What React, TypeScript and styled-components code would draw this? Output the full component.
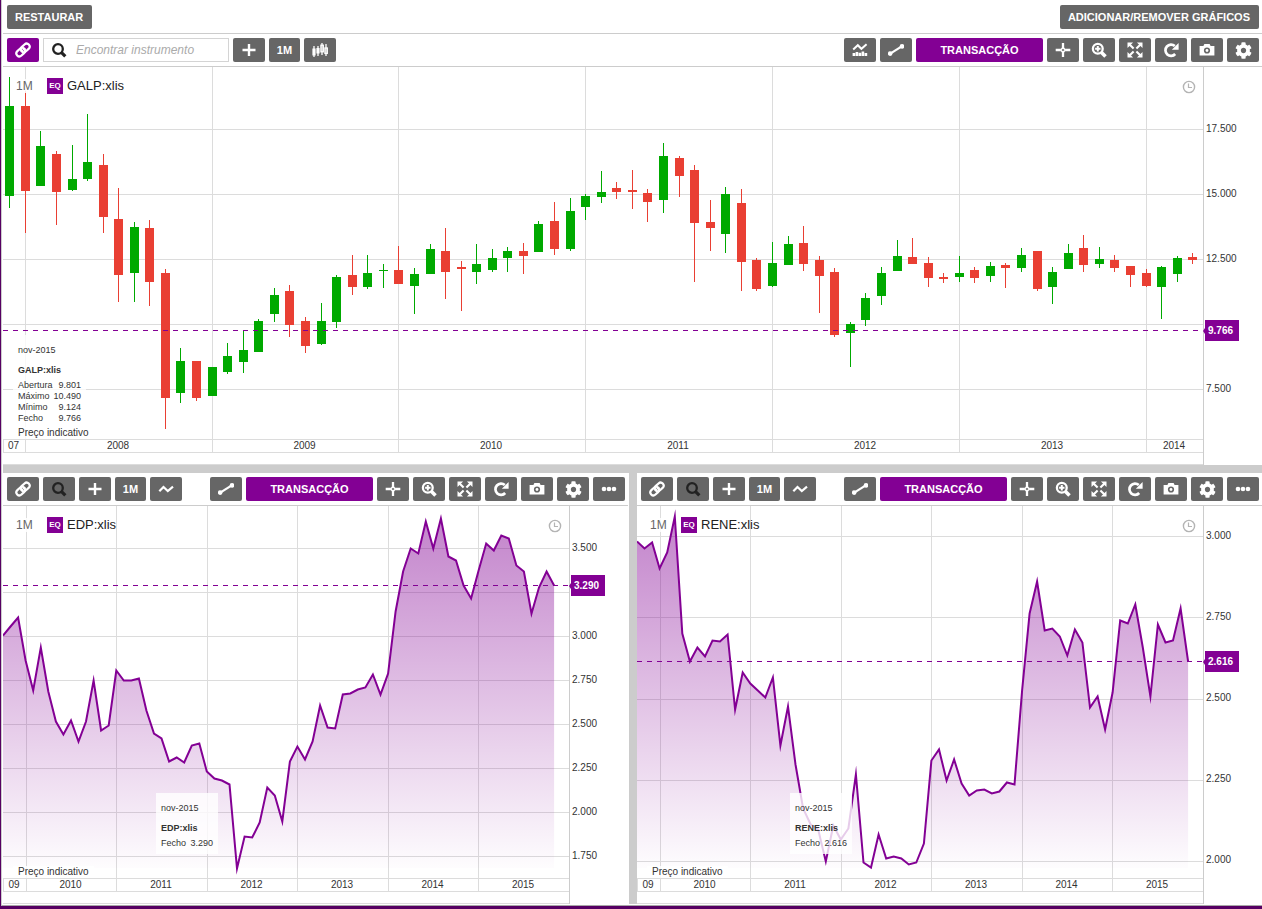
import React from 'react';
import styled, { createGlobalStyle } from 'styled-components';
import { FaCog } from 'react-icons/fa';

const PURPLE = '#830094';
const GREY = '#666';
const GRID = '#dcdcdc';
const UP = '#00a900';
const DOWN = '#e93f33';
const PLOT_HEIGHT = 372;

const GlobalStyle = createGlobalStyle`
  *, *::before, *::after { box-sizing: border-box; }
  body {
    margin: 0;
    background: #fff;
    color: #333;
    font-family: "Liberation Sans", Arial, sans-serif;
  }
`;

const Frame = styled.div`
  padding: 0 0 3px 1px;
  background: #560062;
`;

const Workspace = styled.main`
  padding: 0 0 1px 1px;
  border-left: 1px solid #ccc;
  border-bottom: 1px solid #a8a8a8;
  background: #fff;
`;

const TopBar = styled.header`
  display: flex;
  justify-content: space-between;
  padding: 5px 3px 4px 4px;
  border-bottom: 1px solid #ccc;
`;

const Button = styled.button<{ $accent?: boolean; $width?: number; $dark?: boolean }>`
  display: flex;
  flex: none;
  align-items: center;
  justify-content: center;
  width: ${p => (p.$width ? `${p.$width}px` : 'auto')};
  height: 24px;
  padding: ${p => (p.$width ? '0' : '0 9px 0 8px')};
  border: 0;
  border-radius: 2px;
  background: ${p => (p.$accent ? PURPLE : GREY)};
  color: ${p => (p.$dark ? '#222' : '#fff')};
  font: bold 11px/24px "Liberation Sans", Arial, sans-serif;
  white-space: nowrap;
  cursor: pointer;
`;

const Toolbar = styled.div`
  display: flex;
  justify-content: space-between;
  gap: 4px;
  padding: 4px 3px 4px 4px;
  border-bottom: 1px solid #ccc;
`;

const ButtonGroup = styled.div`
  display: flex;
  gap: 4px;
`;

const SearchField = styled.label`
  display: flex;
  align-items: center;
  gap: 9px;
  width: 186px;
  height: 24px;
  padding-left: 7px;
  border: 1px solid #d4d4d4;
  color: #222;
`;

const SearchInput = styled.input`
  flex: 1;
  min-width: 0;
  padding: 0;
  border: 0;
  outline: 0;
  background: none;
  font: italic 12px/20px "Liberation Sans", Arial, sans-serif;
  &::placeholder { color: #aaa; opacity: 1; }
`;

const Splitter = styled.div`
  flex: none;
  width: 8px;
  background: #ccc;
`;

const RowSplitter = styled.div`
  height: 8px;
  background: #ccc;
`;

const PanelRow = styled.div`
  display: flex;
`;

const PanelBox = styled.section<{ $inset?: number }>`
  flex: 1 1 0;
  min-width: 0;
  padding-right: ${p => p.$inset ?? 0}px;
`;

const Body = styled.div`
  display: flex;
`;

const PlotColumn = styled.div`
  flex: 1;
  min-width: 0;
`;

const Plot = styled.div`
  position: relative;
`;

const PlotSvg = styled.svg`
  display: block;
  width: 100%;
  height: ${PLOT_HEIGHT}px;
`;

const TimeAxis = styled.div<{ $columns: string }>`
  display: grid;
  grid-template-columns: ${p => p.$columns};
  height: 14px;
  border-top: 1px solid ${GRID};
  border-bottom: 1px solid ${GRID};
`;

const TimeCell = styled.div`
  min-width: 0;
  padding-right: 2px;
  border-left: 1px solid ${GRID};
  font-size: 10px;
  line-height: 12px;
  text-align: center;
`;

const Footer = styled.div`
  height: 12px;
  border-bottom: 1px solid ${GRID};
`;

const PriceScale = styled.div<{ $start: number; $gap: number }>`
  position: relative;
  display: flex;
  flex: none;
  flex-direction: column;
  gap: ${p => p.$gap}px;
  width: 59px;
  padding: ${p => p.$start}px 0 0 2px;
  border-left: 1px solid #ccc;
`;

const Price = styled.div`
  height: 12px;
  font-size: 10px;
  line-height: 12px;
`;

const PriceTag = styled.div<{ $top: number }>`
  position: absolute;
  top: ${p => p.$top}px;
  left: 1px;
  width: 34px;
  padding-left: 3px;
  background: ${PURPLE};
  color: #fff;
  font-size: 10px;
  font-weight: bold;
  line-height: 21px;
  &::before {
    content: "";
    position: absolute;
    top: 8px;
    left: -2px;
    border: solid transparent;
    border-width: 3px 2px 3px 0;
    border-right-color: ${PURPLE};
  }
`;

const Heading = styled.div`
  position: absolute;
  top: 11px;
  left: 13px;
  display: flex;
  align-items: center;
  height: 16px;
`;

const Period = styled.span`
  width: 18px;
  margin-right: 13px;
  background: rgba(255, 255, 255, 0.85);
  color: #666;
  font-size: 12px;
  line-height: 14px;
`;

const Kind = styled.span`
  width: 16px;
  margin-right: 4px;
  background: ${PURPLE};
  color: #fff;
  font-size: 8px;
  font-weight: bold;
  line-height: 16px;
  text-align: center;
`;

const Symbol = styled.span`
  color: #222;
  font-size: 13px;
  line-height: 16px;
`;

const Clock = styled.svg`
  position: absolute;
  top: 13px;
  right: 7px;
  width: 14px;
  height: 14px;
`;

const Legend = styled.div<{ $left: number; $top: number; $width: number }>`
  position: absolute;
  top: ${p => p.$top}px;
  left: ${p => p.$left}px;
  width: ${p => p.$width}px;
  padding: 5px;
  background: rgba(255, 255, 255, 0.8);
  font-size: 9px;
  line-height: 20px;
`;

const LegendName = styled.div`
  font-weight: bold;
`;

const LegendTable = styled.table`
  width: 100%;
  border-collapse: collapse;
  line-height: 11px;
  th, td { padding: 0; font-weight: normal; text-align: left; }
  td { text-align: right; }
`;

const Note = styled.div`
  position: absolute;
  bottom: 0;
  left: 10px;
  padding: 0 5px;
  background: rgba(255, 255, 255, 0.8);
  font-size: 10px;
  line-height: 12px;
`;

const Icon = ({ children }: { children: React.ReactNode }) => (
  <svg width="16" height="16" viewBox="0 0 16 16" fill="none" stroke="currentColor" strokeWidth="2" aria-hidden="true">
    {children}
  </svg>
);

const LinkIcon = () => (
  <Icon>
    <g transform="rotate(-43 8 8)" strokeWidth="2.2">
      <rect x="0.1" y="5" width="9.6" height="6" rx="3" />
      <rect x="6.3" y="5" width="9.6" height="6" rx="3" />
      <path d="M5 8h6" strokeWidth="1.4" />
    </g>
  </Icon>
);
const SearchIcon = () => (
  <Icon>
    <circle cx="7" cy="7" r="4.8" strokeWidth="2.3" />
    <path d="M10.3 10.3 L14.3 14.3" strokeWidth="3.2" />
  </Icon>
);
const PlusIcon = () => <Icon><path d="M1.5 8h13M8 2v12" strokeWidth="2.4" /></Icon>;
const CandlesIcon = () => (
  <Icon>
    <path d="M2 4v11M6 4v10M10 1v12M14 2v12" strokeWidth="1.3" />
    <path d="M2 6.5v7M6 6v5.5" strokeWidth="3.2" />
    <rect x="8.9" y="3.2" width="2.4" height="6.6" strokeWidth="1.3" />
    <rect x="12.9" y="6" width="2.4" height="5.4" strokeWidth="1.3" />
  </Icon>
);
const LineIcon = () => <Icon><path d="M1.3 10.3 L5.5 6 L9.8 10 L15 5.7" strokeWidth="2.2" /></Icon>;
const StudiesIcon = () => (
  <Icon>
    <path d="M1.2 7.4 L5.8 3.2 L9.4 6.8 L14.6 2.3" strokeWidth="2" />
    <path d="M1.9 11v3M4.9 10v4M7.9 10.8v3.2M10.9 9.6v4.4M13.9 11v3" strokeWidth="2.6" />
  </Icon>
);
const TrendIcon = () => (
  <Icon>
    <path d="M2.3 11.7 L13.7 4.3" strokeWidth="2.2" />
    <g fill="currentColor" stroke="none">
      <circle cx="2.2" cy="11.6" r="2.3" />
      <circle cx="14" cy="4.4" r="2.3" />
    </g>
  </Icon>
);
const CrosshairIcon = () => (
  <Icon>
    <path d="M0.7 8h5M10.3 8h5M8 1v5M8 10v5" strokeWidth="2.3" />
    <path d="M8 5.6 L10.4 8 L8 10.4 L5.6 8z" strokeWidth="1.5" />
  </Icon>
);
const ZoomIcon = () => (
  <Icon>
    <circle cx="6.8" cy="6.8" r="4.9" strokeWidth="2.3" />
    <path d="M4.1 6.8h5.4M6.8 4.1v5.4" strokeWidth="2" />
    <path d="M10.5 10.5 L14.5 14.5" strokeWidth="3.6" />
  </Icon>
);
const ExpandIcon = () => (
  <Icon>
    <path d="M2.5 2.5 L6.6 6.6M13.5 2.5 L9.4 6.6M2.5 13.5 L6.6 9.4M13.5 13.5 L9.4 9.4" strokeWidth="2.1" />
    <path d="M0.5 0.5h5.6l-5.6 5.6zM15.5 0.5h-5.6l5.6 5.6zM0.5 15.5h5.6l-5.6-5.6zM15.5 15.5h-5.6l5.6-5.6z" fill="currentColor" stroke="none" />
  </Icon>
);
const RefreshIcon = () => (
  <Icon>
    <path d="M12.2 12 A5.6 5.6 0 1 1 11.8 4.1" strokeWidth="2.7" />
    <path d="M15.6 1v6.8H8.8z" fill="currentColor" stroke="none" />
  </Icon>
);
const CameraIcon = () => (
  <Icon>
    <path
      d="M0.6 4h3.8l1-2h5.2l1 2h3.8v9.6H0.6zM8 5.4a3.1 3.1 0 1 0 0 6.2a3.1 3.1 0 0 0 0-6.2z"
      fill="currentColor"
      fillRule="evenodd"
      stroke="none"
    />
    <circle cx="8" cy="8.5" r="1.4" fill="currentColor" stroke="none" />
  </Icon>
);
const DotsIcon = () => (
  <Icon>
    <g fill="currentColor" stroke="none">
      <circle cx="3" cy="8" r="2.3" />
      <circle cx="8" cy="8" r="2.3" />
      <circle cx="13" cy="8" r="2.3" />
    </g>
  </Icon>
);

type Candle = [high: number, top: number, bottom: number, low: number, rising: 0 | 1];

const CANDLES: Candle[] = [
  [10, 39, 129, 141, 1], [24, 39, 124, 166, 0], [64, 79, 119, 119, 1], [84, 87, 125, 158, 0],
  [78, 112, 123, 124, 1], [47, 95, 112, 114, 1], [87, 98, 150, 166, 0], [121, 152, 208, 235, 0],
  [155, 160, 206, 235, 1], [153, 161, 215, 239, 0], [202, 206, 331, 362, 0], [281, 294, 326, 336, 1],
  [294, 294, 331, 334, 0], [300, 300, 329, 329, 1], [276, 289, 305, 307, 1], [263, 283, 295, 306, 1],
  [252, 254, 285, 285, 1], [221, 228, 247, 255, 1], [218, 224, 258, 270, 0], [250, 254, 279, 286, 0],
  [236, 254, 277, 278, 1], [208, 210, 255, 261, 1], [188, 208, 220, 228, 0], [188, 206, 220, 222, 1],
  [197, 203, 204, 221, 1], [179, 203, 217, 217, 0], [201, 207, 219, 247, 1], [177, 182, 207, 207, 1],
  [161, 184, 205, 232, 0], [194, 200, 202, 244, 0], [177, 197, 205, 217, 1], [182, 191, 203, 205, 1],
  [180, 184, 191, 205, 1], [176, 184, 189, 207, 0], [154, 157, 185, 185, 1], [135, 154, 182, 188, 0],
  [131, 144, 182, 184, 1], [127, 129, 140, 153, 1], [104, 125, 130, 136, 1], [115, 121, 125, 132, 0],
  [103, 123, 125, 142, 0], [122, 126, 135, 155, 0], [76, 89, 133, 146, 1], [89, 91, 109, 130, 0],
  [98, 103, 156, 215, 0], [133, 155, 161, 184, 0], [120, 127, 167, 186, 1], [122, 136, 195, 224, 0],
  [191, 193, 222, 224, 0], [175, 196, 219, 220, 1], [169, 177, 198, 198, 1], [159, 176, 197, 204, 0],
  [189, 193, 209, 246, 0], [201, 205, 268, 270, 0], [255, 257, 266, 300, 1], [226, 231, 253, 259, 1],
  [200, 206, 229, 238, 1], [173, 189, 204, 204, 1], [171, 190, 197, 197, 0], [190, 196, 211, 220, 0],
  [206, 210, 212, 216, 0], [189, 206, 210, 215, 1], [200, 203, 211, 216, 0], [195, 199, 209, 215, 1],
  [196, 198, 201, 221, 0], [181, 188, 201, 205, 1], [184, 184, 222, 224, 0], [200, 205, 220, 237, 1],
  [177, 186, 202, 202, 1], [168, 181, 198, 205, 0], [180, 192, 197, 201, 1], [188, 193, 201, 205, 0],
  [199, 199, 208, 220, 0], [202, 206, 219, 220, 0], [199, 200, 220, 252, 1], [189, 191, 207, 215, 1],
  [186, 190, 193, 197, 0],
];

const EDP = [
  129, 120, 111, 154, 184, 141, 185, 215, 228, 214, 235, 215, 174, 224, 219, 164, 174, 174, 172, 204,
  227, 232, 255, 251, 256, 239, 237, 265, 272, 274, 278, 362, 330, 331, 316, 281, 289, 315, 255, 240,
  253, 235, 199, 221, 222, 188, 187, 183, 181, 168, 188, 167, 105, 65, 42, 47, 15, 42, 12, 50,
  54, 79, 92, 64, 37, 44, 29, 32, 59, 65, 107, 81, 65, 79,
];

const RENE = [
  35, 42, 36, 62, 46, 10, 127, 155, 141, 150, 134, 135, 128, 203, 166, 177, 184, 191, 171, 239,
  200, 258, 302, 318, 323, 355, 319, 333, 322, 268, 356, 361, 328, 352, 350, 352, 358, 356, 337, 254,
  243, 274, 253, 277, 289, 284, 283, 287, 285, 276, 278, 184, 107, 75, 124, 122, 130, 149, 123, 136,
  201, 190, 223, 186, 114, 117, 98, 141, 190, 118, 136, 134, 102, 155,
];

const CandleSeries = ({ data }: { data: Candle[] }) => (
  <g shapeRendering="crispEdges">
    {data.map(([high, top, bottom, low, rising], i) => {
      const x = Math.round(6.25 + i * 15.566);
      return (
        <g key={i} fill={rising ? UP : DOWN}>
          <rect x={x} y={high} width="1" height={low - high} />
          <rect x={x - 4} y={top} width="9" height={bottom - top} />
        </g>
      );
    })}
  </g>
);

const AreaSeries = ({ id, data }: { id: string; data: number[] }) => {
  const points = data.map((y, i) => `${(i * 7.55).toFixed(1)},${y + 0.5}`).join(' L');
  const end = ((data.length - 1) * 7.55).toFixed(1);
  return (
    <>
      <defs>
        <linearGradient id={id} gradientUnits="userSpaceOnUse" x1="0" y1="0" x2="0" y2="362">
          <stop offset="0" stopColor={PURPLE} stopOpacity="0.5" />
          <stop offset="1" stopColor={PURPLE} stopOpacity="0.01" />
        </linearGradient>
      </defs>
      <path d={`M0,362 L${points} L${end},362z`} fill={`url(#${id})`} />
      <path d={`M${points}`} fill="none" stroke={PURPLE} strokeWidth="2" strokeMiterlimit="10" />
    </>
  );
};

interface PanelProps {
  symbol: string;
  wide?: boolean;
  inset?: number;
  plotWidth: number;
  years: [label: string, width: number][];
  gridRows: number[];
  dash: number;
  prices: { labels: string[]; start: number; gap: number };
  tag: { text: string; top: number };
  legend: { left: number; top: number; width: number; rows: [string, string][] };
  children: React.ReactNode;
}

const Panel = (p: PanelProps) => {
  let edge = 0;
  const columns = p.years.slice(0, -1).map(([, width]) => (edge += width));
  return (
    <PanelBox $inset={p.inset}>
      <Toolbar>
        <ButtonGroup>
          <Button $width={32} $accent={p.wide} aria-label="Ligar"><LinkIcon /></Button>
          {p.wide ? (
            <SearchField>
              <SearchIcon />
              <SearchInput type="text" placeholder="Encontrar instrumento" aria-label="Encontrar instrumento" />
            </SearchField>
          ) : (
            <Button $width={32} $dark aria-label="Procurar"><SearchIcon /></Button>
          )}
          <Button $width={32} aria-label="Adicionar"><PlusIcon /></Button>
          <Button $width={31}>1M</Button>
          <Button $width={32} aria-label="Tipo">{p.wide ? <CandlesIcon /> : <LineIcon />}</Button>
        </ButtonGroup>
        <ButtonGroup>
          {p.wide && <Button $width={32} aria-label="Estudos"><StudiesIcon /></Button>}
          <Button $width={32} aria-label="Linha"><TrendIcon /></Button>
          <Button $width={127} $accent>TRANSACÇÃO</Button>
          <Button $width={32} aria-label="Mira"><CrosshairIcon /></Button>
          <Button $width={32} aria-label="Ampliar"><ZoomIcon /></Button>
          <Button $width={32} aria-label="Expandir"><ExpandIcon /></Button>
          <Button $width={32} aria-label="Atualizar"><RefreshIcon /></Button>
          <Button $width={32} aria-label="Imagem"><CameraIcon /></Button>
          <Button $width={32} aria-label="Opções"><FaCog size={17} /></Button>
          {!p.wide && <Button $width={32} aria-label="Mais"><DotsIcon /></Button>}
        </ButtonGroup>
      </Toolbar>
      <Body>
        <PlotColumn>
          <Plot>
            <PlotSvg viewBox={`0 0 ${p.plotWidth} ${PLOT_HEIGHT}`} preserveAspectRatio="none" role="img" aria-label={p.symbol}>
              <g fill={GRID} shapeRendering="crispEdges">
                {p.gridRows.map(y => <rect key={y} x="0" y={y} width={p.plotWidth} height="1" />)}
                {columns.map(x => <rect key={x} x={x} y="0" width="1" height={PLOT_HEIGHT} />)}
              </g>
              {p.children}
              <path
                d={`M0 ${p.dash + 0.5}H${p.plotWidth}`}
                stroke={PURPLE}
                strokeDasharray="5 5"
                shapeRendering="crispEdges"
              />
            </PlotSvg>
            <Heading>
              <Period>1M</Period>
              <Kind>EQ</Kind>
              <Symbol>{p.symbol}</Symbol>
            </Heading>
            <Clock viewBox="0 0 14 14" fill="none" stroke="#b4b4b4" aria-hidden="true">
              <circle cx="7" cy="7" r="5.6" strokeWidth="1.4" />
              <path d="M6.5 3.5v4h3.5" strokeWidth="1.2" />
            </Clock>
            <Legend $left={p.legend.left} $top={p.legend.top} $width={p.legend.width}>
              <div>nov-2015</div>
              <LegendName>{p.symbol}</LegendName>
              <LegendTable>
                <tbody>
                  {p.legend.rows.map(([name, value]) => (
                    <tr key={name}><th scope="row">{name}</th><td>{value}</td></tr>
                  ))}
                </tbody>
              </LegendTable>
            </Legend>
            <Note>Preço indicativo</Note>
          </Plot>
          <TimeAxis $columns={p.years.map(([, width]) => `minmax(0, ${width}fr)`).join(' ')}>
            {p.years.map(([label]) => <TimeCell key={label}>{label}</TimeCell>)}
          </TimeAxis>
          <Footer />
        </PlotColumn>
        <PriceScale $start={p.prices.start} $gap={p.prices.gap}>
          {p.prices.labels.map((label, i) => <Price key={i}>{label}</Price>)}
          <PriceTag $top={p.tag.top}>{p.tag.text}</PriceTag>
        </PriceScale>
      </Body>
    </PanelBox>
  );
};

const LOWER_YEARS: [string, number][] = [
  ['09', 23], ['2010', 90], ['2011', 91], ['2012', 90], ['2013', 91], ['2014', 90], ['2015', 91],
];

export default function App() {
  return (
    <Frame>
      <GlobalStyle />
      <Workspace>
        <TopBar>
          <Button>RESTAURAR</Button>
          <Button>ADICIONAR/REMOVER GRÁFICOS</Button>
        </TopBar>
        <Panel
          wide
          symbol="GALP:xlis"
          plotWidth={1200}
          years={[['07', 22], ['2008', 187], ['2009', 186], ['2010', 187], ['2011', 187], ['2012', 187], ['2013', 187], ['2014', 57]]}
          gridRows={[62, 127, 192, 257, 322]}
          dash={263}
          prices={{ labels: ['17.500', '15.000', '12.500', '', '7.500'], start: 56, gap: 53 }}
          tag={{ text: '9.766', top: 253 }}
          legend={{
            left: 10,
            top: 268,
            width: 73,
            rows: [['Abertura', '9.801'], ['Máximo', '10.490'], ['Mínimo', '9.124'], ['Fecho', '9.766']],
          }}
        >
          <CandleSeries data={CANDLES} />
        </Panel>
        <RowSplitter />
        <PanelRow>
          <Panel
            symbol="EDP:xlis"
            inset={1}
            plotWidth={566}
            years={LOWER_YEARS}
            gridRows={[42, 86, 130, 174, 218, 262, 306, 350]}
            dash={79}
            prices={{ labels: ['3.500', '', '3.000', '2.750', '2.500', '2.250', '2.000', '1.750'], start: 36, gap: 32 }}
            tag={{ text: '3.290', top: 69 }}
            legend={{ left: 153, top: 287, width: 62, rows: [['Fecho', '3.290']] }}
          >
            <AreaSeries id="edp-fill" data={EDP} />
          </Panel>
          <Splitter />
          <Panel
            symbol="RENE:xlis"
            plotWidth={566}
            years={LOWER_YEARS}
            gridRows={[30, 111, 193, 274, 355]}
            dash={155}
            prices={{ labels: ['3.000', '2.750', '2.500', '2.250', '2.000'], start: 24, gap: 69 }}
            tag={{ text: '2.616', top: 145 }}
            legend={{ left: 153, top: 287, width: 62, rows: [['Fecho', '2.616']] }}
          >
            <AreaSeries id="rene-fill" data={RENE} />
          </Panel>
        </PanelRow>
      </Workspace>
    </Frame>
  );
}
